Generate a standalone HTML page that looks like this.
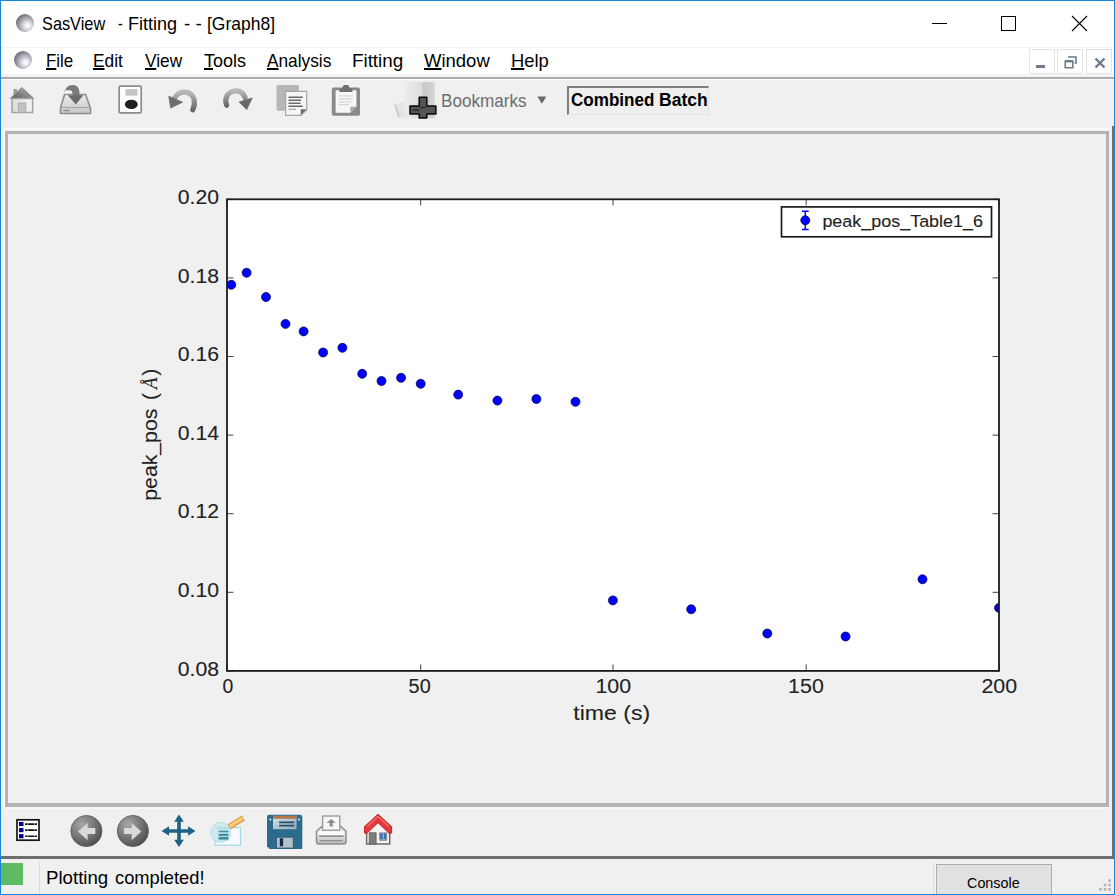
<!DOCTYPE html>
<html><head><meta charset="utf-8">
<style>
*{margin:0;padding:0;box-sizing:border-box}
html,body{width:1115px;height:895px;overflow:hidden;background:#f0f0f0;font-family:"Liberation Sans",sans-serif;color:#000}
.a{position:absolute}
#win{position:absolute;left:0;top:0;width:1115px;height:895px;border:1px solid #1883d7;background:#f0f0f0}
#title{left:1px;top:1px;width:1113px;height:46px;background:#fff}
#menu{left:1px;top:47px;width:1113px;height:30px;background:#fff}
.t{white-space:nowrap;line-height:1}
.u{text-decoration:underline;text-underline-offset:1px;text-decoration-thickness:1.6px}
.sph{border-radius:50%;background:radial-gradient(circle at 64% 64%,#ffffff 0%,#f0eff3 14%,#b4b2bb 42%,#6e6b77 75%,#4c4856 100%)}
.mdib{top:49px;width:26px;height:25px;border:1px solid #e3e3e3;background:#fff}
</style></head><body>
<div id="win"></div>
<div class="a" id="title"></div>
<div class="a" id="menu"></div>
<!-- faint separator between title and menu -->
<div class="a" style="left:1px;top:47px;width:1113px;height:1px;background:#f3f3f3"></div>

<!-- title -->
<div class="a sph" style="left:16px;top:14px;width:18px;height:18px"></div>
<!-- window controls -->
<div class="a" style="left:932px;top:23px;width:15px;height:1px;background:#000"></div>
<div class="a" style="left:1001px;top:16px;width:15px;height:15px;border:1px solid #000"></div>
<svg class="a" style="left:1071px;top:15px" width="17" height="17" viewBox="0 0 17 17"><path d="M1 1L16 16M16 1L1 16" stroke="#000" stroke-width="1.1"/></svg>

<!-- menu -->
<div class="a sph" style="left:14px;top:51px;width:18px;height:18px"></div>
<!-- mdi buttons -->
<div class="a mdib" style="left:1029px"></div>
<div class="a mdib" style="left:1057px"></div>
<div class="a mdib" style="left:1086px"></div>
<div class="a" style="left:1036px;top:65px;width:9px;height:3px;background:#6c7a8b"></div>
<svg class="a" style="left:1064px;top:56px" width="13" height="13" viewBox="0 0 13 13"><path d="M4 1h8v6h-1.5M1.25 5.25h7.5v6.5h-7.5z" fill="none" stroke="#6c7a8b" stroke-width="1.6"/><path d="M1 4h8v2.4H1z" fill="#6c7a8b"/></svg>
<svg class="a" style="left:1094px;top:57px" width="12" height="12" viewBox="0 0 12 12"><path d="M1.5 1.5L10.5 10.5M10.5 1.5L1.5 10.5" stroke="#6c7a8b" stroke-width="2.4"/></svg>

<!-- menu/toolbar separator -->
<div class="a" style="left:1px;top:74px;width:1113px;height:3px;background:#f3f3f3"></div>
<div class="a" style="left:1px;top:77px;width:1113px;height:2px;background:#acacac"></div>
<div class="a" style="left:1px;top:79px;width:1113px;height:1px;background:#fafafa"></div>

<!-- TOOLBAR placeholder -->
<svg class="a" style="left:0;top:79px" width="720" height="48" viewBox="0 79 720 48">
<defs>
<linearGradient id="roofg" x1="0" y1="1" x2="1" y2="0"><stop offset="0" stop-color="#5e5e5e"/><stop offset="1" stop-color="#b4b4b4"/></linearGradient>
<linearGradient id="wallg" x1="0" y1="0" x2="1" y2="0"><stop offset="0" stop-color="#dcdcdc"/><stop offset="1" stop-color="#f4f4f4"/></linearGradient>
<linearGradient id="trayg" x1="0" y1="0" x2="0" y2="1"><stop offset="0" stop-color="#ececec"/><stop offset="1" stop-color="#c8c8c8"/></linearGradient>
<linearGradient id="arcg" x1="0" y1="0" x2="0" y2="1"><stop offset="0" stop-color="#b8b8b8"/><stop offset="1" stop-color="#6a6a6a"/></linearGradient>
<linearGradient id="bmg" x1="0" y1="0" x2="1" y2="0"><stop offset="0" stop-color="#ececec"/><stop offset="0.55" stop-color="#dedede"/><stop offset="0.62" stop-color="#c8c8c8"/><stop offset="1" stop-color="#d4d4d4"/></linearGradient>
</defs>
<!-- home gray -->
<path d="M13.5 97V89h3.5v5z" fill="#9a9a9a"/>
<path d="M10.2 98.5L21.9 87.6L33.8 98.5z" fill="url(#roofg)" stroke="#8a8a8a" stroke-width="1"/>
<rect x="12" y="98.5" width="20.6" height="14" fill="url(#wallg)" stroke="#a2a2a2" stroke-width="1.5"/>
<rect x="18.3" y="103" width="7.4" height="9.5" fill="#c2c2c2" stroke="#ababab" stroke-width="1"/>
<!-- tray -->
<path d="M64.5 94.5h21L90.5 108v5.5h-30V108z" fill="url(#trayg)" stroke="#8e8e8e" stroke-width="1.6" stroke-linejoin="round"/>
<path d="M61 107.5h29" stroke="#a6a6a6" stroke-width="1.2"/>
<path d="M63.5 110.5h6" stroke="#8a8a8a" stroke-width="1.4"/>
<path d="M64.5 95C64.5 88 68 85 73 85C77.5 85 79.5 88.5 79.5 93.5V97H72.5V93.5C72.5 91.5 71 90.5 69.5 90.5H64.5z" fill="#7a7a7a"/>
<path d="M67.7 95.3h15.6L75.8 104.4z" fill="#6a6a6a"/>
<path d="M65.5 91.5h6" stroke="#fafafa" stroke-width="1.6"/>
<!-- document with blob -->
<rect x="119.2" y="86.1" width="22" height="26.8" rx="1.2" fill="#fff" stroke="#8c8c8c" stroke-width="1.7"/>
<rect x="125.4" y="89.1" width="12.1" height="6.6" fill="#c6c6c6"/>
<ellipse cx="131.3" cy="104.4" rx="6.4" ry="4.7" fill="#1e1e1e"/>
<!-- undo -->
<path d="M192.8 109.8C195.8 103 195 94 186.5 92.3C180.5 91.2 177 94 175 97.5" fill="none" stroke="url(#arcg)" stroke-width="5.2" stroke-linecap="round"/>
<path d="M168.8 96.2L170.6 108L182.6 102.2z" fill="#6e6e6e" stroke="#6e6e6e" stroke-width="0.8" stroke-linejoin="round"/>
<!-- redo -->
<path d="M226.6 105.2C224.5 99.5 226.5 92 234.5 91C240 90.4 243.5 93.5 245 97.5" fill="none" stroke="url(#arcg)" stroke-width="5.2" stroke-linecap="round"/>
<path d="M239.2 102L246.7 109.6L252.2 98z" fill="#686868" stroke="#686868" stroke-width="0.8" stroke-linejoin="round"/>
<!-- copy -->
<rect x="276.5" y="85" width="22.5" height="25.8" rx="1.5" fill="#b6b6b6"/>
<path d="M285.6 91.3h21.1v18.5l-5.5 5.5h-15.6z" fill="#f6f6f6" stroke="#a6a6a6" stroke-width="1.2"/>
<path d="M306.7 109.3h-6v6z" fill="#6e6e6e"/>
<g stroke="#6a6a6a" stroke-width="1.5"><path d="M288.5 97.2h14.3M288.5 100.3h12.5M288.5 103.3h12M288.5 106.3h14.3"/></g>
<path d="M288.5 109.3h7.5" stroke="#b0b0b0" stroke-width="1.5"/>
<!-- clipboard -->
<rect x="331.8" y="87.6" width="28.2" height="28.2" rx="1.8" fill="#8a8a8a"/>
<path d="M335.6 90.3h20.8v16.5l-6 6h-14.8z" fill="#f7f7f7"/>
<path d="M356.4 106.8h-6v6z" fill="#a8a8a8"/>
<path d="M339.4 92.1v-3.5h2.5l1.8-3.5h4.5l1.8 3.5h2.4v3.5z" fill="#707070"/>
<g stroke="#d6d6d6" stroke-width="1.2"><path d="M339 95.8h14M339 98.8h14M339 101.8h12M339 104.6h10"/></g>
<!-- bookmark -->
<path d="M404.7 82h30v36.3h-30z" fill="url(#bmg)"/>
<path d="M395 104l9.7-2v16.3l-5 -0.5z" fill="#e4e4e4"/>
<path d="M395 104.5l4 13" stroke="#c4c4c4" stroke-width="1.5"/>
<path d="M419.2 97.2h7.6v8.8h9.1v8h-9.1v4h-7.6v-4h-9.2v-8h9.2z" fill="#555" stroke="#0a0a0a" stroke-width="1.5" stroke-linejoin="round"/><path d="M420.5 107.5h5M413 110h6" stroke="#2a2a2a" stroke-width="1.6"/>
<text x="441" y="106.7" font-family="Liberation Sans" font-size="18.6" fill="#6d6d6d" textLength="85.6" lengthAdjust="spacingAndGlyphs">Bookmarks</text>
<path d="M537.4 96.6h8.9l-4.45 7.2z" fill="#6a6a6a"/>
</svg>
<div class="a" style="left:567px;top:86px;width:142px;height:29px;border-top:2px solid #7e7e7e;border-left:2px solid #7e7e7e;border-right:1px solid #e3e3e3;border-bottom:1px solid #e3e3e3;background:#efefef"></div>
<div class="a t" style="left:570.8px;top:91.3px;font-size:18px;font-weight:bold;transform:scaleX(0.948);transform-origin:0 0">Combined</div>
<div class="a t" style="left:659.4px;top:91.3px;font-size:18px;font-weight:bold;transform:scaleX(0.973);transform-origin:0 0">Batch</div>


<!-- main frame -->
<div class="a" style="left:3px;top:128px;width:1106px;height:679px;border-top:2px solid #fafafa;border-left:2px solid #fafafa"></div>
<div class="a" style="left:5px;top:131px;width:1104px;height:676px;border:3px solid #b3b3b3;border-bottom-width:4px"></div>
<div class="a" style="left:5px;top:807.3px;width:1104px;height:1.8px;background:#f8f8f8"></div>
<!-- outer dark border right & bottom -->
<div class="a" style="left:1112px;top:126px;width:2px;height:733px;background:#6e6e6e"></div>
<div class="a" style="left:1px;top:856px;width:1113px;height:3px;background:#6e6e6e"></div>

<!-- PLOT placeholder -->
<svg class="a" style="left:0;top:0" width="1115" height="895" viewBox="0 0 1115 895">
<defs><clipPath id="ax"><rect x="227.0" y="199.3" width="772.0" height="471.6"/></clipPath></defs>
<rect x="227.0" y="199.3" width="772.0" height="471.6" fill="#fff"/>
<g clip-path="url(#ax)" fill="#0000ff" stroke="#00003a" stroke-width="0.7">
<circle cx="231.3" cy="284.8" r="4.5"/>
<circle cx="246.6" cy="272.8" r="4.5"/>
<circle cx="266.0" cy="297.0" r="4.5"/>
<circle cx="285.5" cy="323.9" r="4.5"/>
<circle cx="303.6" cy="331.4" r="4.5"/>
<circle cx="323.1" cy="352.5" r="4.5"/>
<circle cx="342.4" cy="347.8" r="4.5"/>
<circle cx="362.2" cy="373.8" r="4.5"/>
<circle cx="381.5" cy="381.0" r="4.5"/>
<circle cx="401.1" cy="377.8" r="4.5"/>
<circle cx="420.7" cy="383.8" r="4.5"/>
<circle cx="458.2" cy="394.6" r="4.5"/>
<circle cx="497.4" cy="400.6" r="4.5"/>
<circle cx="536.4" cy="399.0" r="4.5"/>
<circle cx="575.5" cy="401.8" r="4.5"/>
<circle cx="612.9" cy="600.4" r="4.5"/>
<circle cx="691.2" cy="609.3" r="4.5"/>
<circle cx="767.3" cy="633.5" r="4.5"/>
<circle cx="845.6" cy="636.5" r="4.5"/>
<circle cx="922.5" cy="579.3" r="4.5"/>
<circle cx="999.0" cy="607.9" r="4.5"/>
</g>
<g stroke="#444" stroke-width="1">
<path d="M227.0 199.3v6M227.0 670.9v-6.5"/>
<path d="M420.7 199.3v6M420.7 670.9v-6.5"/>
<path d="M613.0 199.3v6M613.0 670.9v-6.5"/>
<path d="M806.2 199.3v6M806.2 670.9v-6.5"/>
<path d="M999.0 199.3v6M999.0 670.9v-6.5"/>
<path d="M227.0 199.3h6.5M999.0 199.3h-6.5"/>
<path d="M227.0 277.9h6.5M999.0 277.9h-6.5"/>
<path d="M227.0 356.5h6.5M999.0 356.5h-6.5"/>
<path d="M227.0 435.1h6.5M999.0 435.1h-6.5"/>
<path d="M227.0 513.7h6.5M999.0 513.7h-6.5"/>
<path d="M227.0 592.3h6.5M999.0 592.3h-6.5"/>
<path d="M227.0 670.9h6.5M999.0 670.9h-6.5"/>
</g>
<rect x="227.0" y="199.3" width="772.0" height="471.6" fill="none" stroke="#1c1c1c" stroke-width="1.8"/>
<g font-family="Liberation Sans" font-size="19.6" fill="#222" stroke="#222" stroke-width="0.1">
<text x="219.1" y="204.0" text-anchor="end" textLength="41.3" lengthAdjust="spacingAndGlyphs">0.20</text>
<text x="219.1" y="282.6" text-anchor="end" textLength="41.3" lengthAdjust="spacingAndGlyphs">0.18</text>
<text x="219.1" y="361.2" text-anchor="end" textLength="41.3" lengthAdjust="spacingAndGlyphs">0.16</text>
<text x="219.1" y="439.8" text-anchor="end" textLength="41.3" lengthAdjust="spacingAndGlyphs">0.14</text>
<text x="219.1" y="518.4" text-anchor="end" textLength="41.3" lengthAdjust="spacingAndGlyphs">0.12</text>
<text x="219.1" y="597.0" text-anchor="end" textLength="41.3" lengthAdjust="spacingAndGlyphs">0.10</text>
<text x="219.1" y="675.6" text-anchor="end" textLength="41.3" lengthAdjust="spacingAndGlyphs">0.08</text>
<text x="222.6" y="692.6" textLength="10.8" lengthAdjust="spacingAndGlyphs">0</text>
<text x="408.6" y="692.6" textLength="22.1" lengthAdjust="spacingAndGlyphs">50</text>
<text x="595.4" y="692.6" textLength="35.7" lengthAdjust="spacingAndGlyphs">100</text>
<text x="788.1" y="692.6" textLength="35.7" lengthAdjust="spacingAndGlyphs">150</text>
<text x="981.4" y="692.6" textLength="35.7" lengthAdjust="spacingAndGlyphs">200</text>
<text x="573.3" y="719.6" font-size="20.8" textLength="77" lengthAdjust="spacingAndGlyphs">time (s)</text>
<g transform="translate(157,500.7) rotate(-90)" font-size="20.4"><text x="0" y="0" textLength="92" lengthAdjust="spacingAndGlyphs">peak_pos</text><text x="100.6" y="0">(</text><text x="111.8" y="0" font-family="Liberation Serif" font-style="italic" textLength="11.5" lengthAdjust="spacingAndGlyphs">&#197;</text><text x="125.3" y="0">)</text></g>
</g>
<rect x="781.5" y="206.9" width="210" height="29.9" fill="#fff" stroke="#1c1c1c" stroke-width="1.7"/>
<path d="M805.3 211.3V229.5M801.9 211.3h6.8M801.9 229.5h6.8" stroke="#0000ff" stroke-width="1.5"/>
<circle cx="805.3" cy="220.3" r="4.5" fill="#0000ff" stroke="#00003a" stroke-width="0.7"/>
<text x="822.4" y="227.1" font-family="Liberation Sans" font-size="16.8" fill="#222" stroke="#222" stroke-width="0.1" textLength="160.6" lengthAdjust="spacingAndGlyphs">peak_pos_Table1_6</text>
</svg>

<!-- NAVTOOLBAR placeholder -->
<svg class="a" style="left:0;top:808px" width="400" height="48" viewBox="0 808 400 48">
<defs>
<radialGradient id="btng" cx="0.35" cy="0.3" r="0.75"><stop offset="0" stop-color="#a8a8a8"/><stop offset="0.55" stop-color="#767676"/><stop offset="1" stop-color="#4e4e4e"/></radialGradient>
<linearGradient id="flpl" x1="0" y1="0" x2="1" y2="1"><stop offset="0" stop-color="#d4e2ea"/><stop offset="1" stop-color="#95adbd"/></linearGradient>
<linearGradient id="prb" x1="0" y1="0" x2="0" y2="1"><stop offset="0" stop-color="#f8f8f8"/><stop offset="0.45" stop-color="#e6e6e6"/><stop offset="1" stop-color="#b8b8b8"/></linearGradient>
<linearGradient id="pen" x1="0" y1="0" x2="0" y2="1"><stop offset="0" stop-color="#f6c77a"/><stop offset="1" stop-color="#d98f3c"/></linearGradient>
</defs>
<!-- list icon -->
<rect x="17" y="819.8" width="22" height="20.4" fill="#fff" stroke="#151515" stroke-width="1.7"/>
<g fill="#000090"><rect x="19" y="821.9" width="4.5" height="4.2"/><rect x="19" y="828" width="4.5" height="4.2"/><rect x="19" y="834.1" width="4.5" height="4.2"/></g>
<g stroke="#111" stroke-width="1.6" stroke-dasharray="2.5 0.5 6.5 0.5 3"><path d="M25.1 824.1h11.9M25.1 830.1h11.9M25.1 836.2h11.9"/></g>
<!-- back -->
<circle cx="86.4" cy="831" r="15.6" fill="url(#btng)" stroke="#5a5a5a" stroke-width="0.8"/>
<path d="M78 831.4L87.6 823.1V828.1H95.3V834H87.6V840.3z" fill="#dadada"/>
<!-- forward -->
<circle cx="132.9" cy="831" r="15.6" fill="url(#btng)" stroke="#5a5a5a" stroke-width="0.8"/>
<path d="M141.3 831.4L131.7 823.1V828.1H124V834H131.7V840.3z" fill="#dadada"/>
<!-- move -->
<g fill="#1f6384">
<path d="M177.2 821h3.6v20h-3.6zM169 829.2h20v3.6h-20z"/>
<path d="M179 814.4L183.8 821.8H174.2z"/>
<path d="M179 847.1L183.8 839.8H174.2z"/>
<path d="M161.6 831L169 826.2V835.8z"/>
<path d="M195.5 831L188.1 826.2V835.8z"/>
</g>
<!-- zoom -->
<rect x="215" y="827.5" width="25.5" height="17.7" fill="#f9f9ff" stroke="#a9dbe2" stroke-width="1.3"/>
<circle cx="220.7" cy="832.4" r="10" fill="#cde9ee" fill-opacity="0.8" stroke="#b2dde5" stroke-width="1"/>
<rect x="214.6" y="826.6" width="14.5" height="14.4" fill="#b3dde4" fill-opacity="0.75"/>
<path d="M216 828v12" stroke="#e6f5f8" stroke-width="1.2"/>
<g stroke="#3f8b9b"><path d="M218.8 831.5h9.6" stroke-width="1.4"/><path d="M218.8 834.9h9.6" stroke-width="2"/><path d="M218.8 838.3h9.6" stroke-width="2.6"/></g>
<path d="M229.2 826.8L243.4 818" stroke="#e0994a" stroke-width="5.8"/>
<path d="M229.8 826.2L242.9 818.1" stroke="#f6cc78" stroke-width="3.4"/>
<!-- floppy -->
<path d="M267 817a2.3 2.3 0 0 1 2.3-2.3h30.7a2.3 2.3 0 0 1 2.3 2.3V848.9H269.6L267 846.2z" fill="#2c6b8d"/>
<rect x="273" y="815.9" width="23.5" height="13.3" fill="url(#flpl)"/>
<rect x="273" y="815.9" width="23.5" height="2.9" fill="#b5784a"/>
<path d="M279.1 822.4h15.3M279.1 825.7h15.3" stroke="#244e6b" stroke-width="1.8"/>
<circle cx="270.3" cy="819.6" r="1" fill="#e8f0f4"/><circle cx="299" cy="819.6" r="1" fill="#e8f0f4"/>
<rect x="276.5" y="837.2" width="16.7" height="10.8" fill="#b2c0cb" stroke="#2a4a66" stroke-width="0.7"/>
<rect x="279.8" y="838.3" width="3.3" height="8" fill="#1a2a4c"/>
<!-- printer -->
<path d="M321.8 826.6H340.9L346 831.2V841.5Q346 844 343.5 844H318.8Q316.5 844 316.5 841.5V831.2z" fill="url(#prb)" stroke="#8e8e8e" stroke-width="1.5" stroke-linejoin="round"/>
<rect x="322.6" y="816" width="17.2" height="14.2" fill="#f6f6f6" stroke="#9c9c9c" stroke-width="1.4"/>
<path d="M331.2 819.1L335.8 822.7H332.7V826.6H329.7V822.7H326.6z" fill="#8a8a8a"/>
<path d="M318.5 831.5h25.5v4h-25.5z" fill="#fafafa"/>
<path d="M319 836.1h24.5" stroke="#7a7a7a" stroke-width="1.3"/>
<path d="M320 840.6h22.5" stroke="#8e8e8e" stroke-width="1.3"/>
<!-- red house -->
<path d="M366.6 831V843.9H389.7V831L378 821z" fill="#f3f3f3" stroke="#6a6a6a" stroke-width="1.5"/>
<path d="M364.5 832.9V826.6L378 814.2L391.6 826.6V832.9L389.6 833.8L378 822.7L366.4 833.8z" fill="#e03a3a" stroke="#c01818" stroke-width="0.9" stroke-linejoin="round"/>
<path d="M367 826.5L378 816.5L389 826.5" fill="none" stroke="#f06a6a" stroke-width="1.6"/>
<rect x="369.2" y="832.8" width="6.9" height="11.1" fill="#7c7d79" stroke="#5c5c5c" stroke-width="0.8"/>
<rect x="379.7" y="832.9" width="7" height="6.4" fill="#3c6fc2" stroke="#8a8a8a" stroke-width="0.9"/>
<path d="M383.2 832.9v6.4" stroke="#c8c8c8" stroke-width="0.9"/>
<path d="M379.5 840.3h7.4" stroke="#8a8a8a" stroke-width="1"/>
</svg>


<!-- status bar -->
<div class="a" style="left:1px;top:863px;width:22px;height:22px;background:#5dbb63"></div>
<div class="a" style="left:39px;top:862px;width:1px;height:32px;background:#dadada"></div>
<div class="a" style="left:933px;top:863px;width:1px;height:31px;background:#dadada"></div>
<div class="a" style="left:936px;top:864px;width:116px;height:31px;border:1px solid #adadad;background:#e1e1e1"></div>

<svg class="a" style="left:1095px;top:875px" width="18" height="18" viewBox="1095 875 18 18"><g fill="#b6b6b6"><rect x="1108.2" y="879.2" width="2.7" height="2.7"/><rect x="1103.7" y="883.6" width="2.7" height="2.7"/><rect x="1108.2" y="883.6" width="2.7" height="2.7"/><rect x="1099.2" y="888" width="2.7" height="2.7"/><rect x="1103.7" y="888" width="2.7" height="2.7"/><rect x="1108.2" y="888" width="2.7" height="2.7"/></g></svg>
<div class="a" style="left:0;top:0;width:1115px;height:895px;border:1px solid #1883d7"></div>
<!--TXT-->
<div class="a t" style="left:42.10px;top:15.06px;font-size:18.6px;transform:scaleX(0.8777);transform-origin:0 0">SasView</div>
<div class="a t" style="left:117.50px;top:15.06px;font-size:18.6px;transform:scaleX(0.7667);transform-origin:0 0">-</div>
<div class="a t" style="left:128.13px;top:15.06px;font-size:18.6px;transform:scaleX(0.9697);transform-origin:0 0">Fitting</div>
<div class="a t" style="left:183.90px;top:15.06px;font-size:18.6px;transform:scaleX(1.0082);transform-origin:0 0">- -</div>
<div class="a t" style="left:207.46px;top:15.06px;font-size:18.6px;transform:scaleX(0.9404);transform-origin:0 0">[Graph8]</div>
<div class="a t" style="left:46.29px;top:51.86px;font-size:18.6px;transform:scaleX(0.9085);transform-origin:0 0"><span class="u">F</span>ile</div>
<div class="a t" style="left:93.27px;top:51.86px;font-size:18.6px;transform:scaleX(0.9287);transform-origin:0 0"><span class="u">E</span>dit</div>
<div class="a t" style="left:144.90px;top:51.86px;font-size:18.6px;transform:scaleX(0.9300);transform-origin:0 0"><span class="u">V</span>iew</div>
<div class="a t" style="left:203.90px;top:51.86px;font-size:18.6px;transform:scaleX(0.9696);transform-origin:0 0"><span class="u">T</span>ools</div>
<div class="a t" style="left:267.00px;top:51.86px;font-size:18.6px;transform:scaleX(0.9284);transform-origin:0 0"><span class="u">A</span>nalysis</div>
<div class="a t" style="left:351.59px;top:51.86px;font-size:18.6px;transform:scaleX(1.0103);transform-origin:0 0">Fitting</div>
<div class="a t" style="left:424.00px;top:51.86px;font-size:18.6px;transform:scaleX(0.9940);transform-origin:0 0"><span class="u">W</span>indow</div>
<div class="a t" style="left:510.91px;top:51.86px;font-size:18.6px;transform:scaleX(0.9892);transform-origin:0 0"><span class="u">H</span>elp</div>
<div class="a t" style="left:45.90px;top:868.86px;font-size:18.6px;transform:scaleX(1.0037);transform-origin:0 0">Plotting</div>
<div class="a t" style="left:114.70px;top:868.86px;font-size:18.6px;transform:scaleX(0.9845);transform-origin:0 0">completed!</div>
<div class="a t" style="left:966.90px;top:875.20px;font-size:15px;transform:scaleX(0.9581);transform-origin:0 0">Console</div>
<!--/TXT-->
</body></html>
